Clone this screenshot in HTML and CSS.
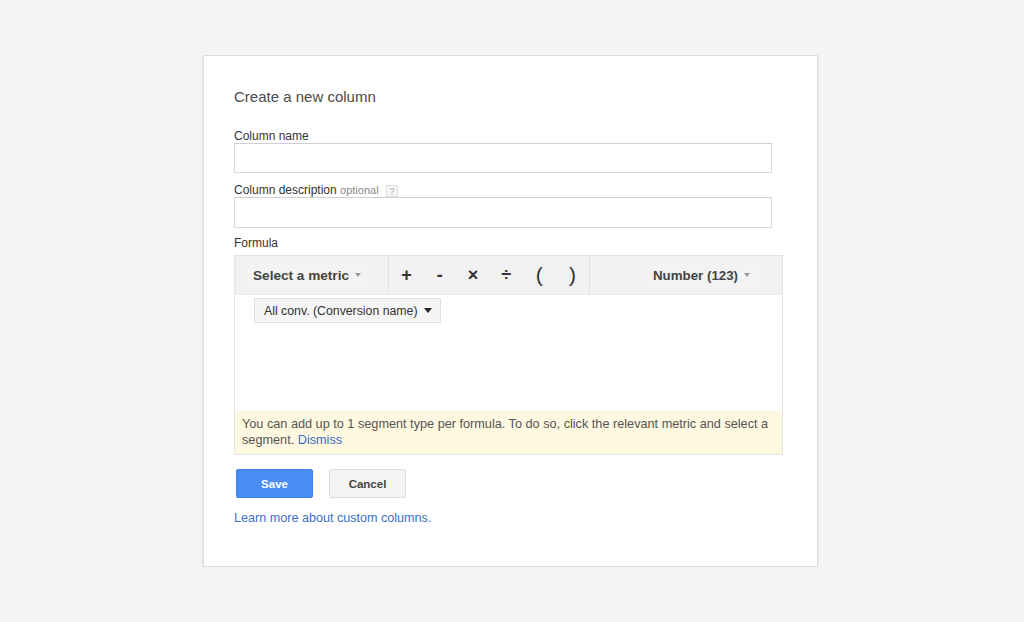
FILE: index.html
```html
<!DOCTYPE html>
<html lang="en">
<head>
  <meta charset="UTF-8">
  <title>Create a new column</title>
  <link rel="stylesheet" href="styles.css">
</head>
<body>

  <!-- Dialog -->
  <div class="dialog">
    <h2 class="title">Create a new column</h2>

    <label class="field-label">Column name</label>
    <input type="text" class="field-input name-input">

    <label class="field-label desc-label">Column description <span class="optional">optional</span> <span class="help">?</span></label>
    <input type="text" class="field-input desc-input">

    <label class="field-label formula-label">Formula</label>
    <div class="formula">
      <div class="toolbar">
        <div class="tb-metric"><span class="tb-btn">Select a metric <span class="caret"></span></span></div>
        <div class="tb-ops">
          <span class="op">+</span>
          <span class="op">-</span>
          <span class="op">×</span>
          <span class="op">÷</span>
          <span class="op paren">(</span>
          <span class="op paren">)</span>
        </div>
        <div class="tb-number"><span class="tb-btn">Number (123) <span class="caret"></span></span></div>
      </div>
      <div class="formula-body">
        <span class="chip">All conv. (Conversion name) <span class="caret dark"></span></span>
      </div>
      <p class="notice">You can add up to 1 segment type per formula. To do so, click the relevant metric and select a segment.&nbsp;<a href="#" class="link">Dismiss</a></p>
    </div>

    <div class="actions">
      <button class="btn btn-save">Save</button>
      <button class="btn btn-cancel">Cancel</button>
    </div>

    <a href="#" class="link learn">Learn more about custom columns.</a>
  </div>

</body>
</html>
```

FILE: styles.css
```css
* {
  margin: 0;
  padding: 0;
  box-sizing: border-box;
}

body {
  font-family: 'Liberation Sans', Arial, sans-serif;
  background: #f4f4f4;
  color: #333;
  font-size: 12px;
}

.dialog {
  width: 615px;
  height: 512px;
  margin: 55px 0 0 203px;
  padding: 31px 44px 0 30px;
  background: #fff;
  border: 1px solid #dcdcdc;
  box-shadow: 0 2px 2px rgba(0, 0, 0, 0.12);
}

.title {
  font-size: 15px;
  font-weight: normal;
  line-height: 20px;
  color: #4a4a4a;
  margin-bottom: 23px;
}

.field-label {
  display: block;
  font-size: 12px;
  line-height: 13px;
  color: #333;
}

.desc-label {
  margin-top: 11px;
}

.formula-label {
  margin-top: 9px;
}

.optional {
  color: #888;
  font-size: 11px;
}

.help {
  display: inline-block;
  width: 12px;
  height: 12px;
  margin-left: 4px;
  border: 1px solid #ddd;
  background: #f6f6f6;
  color: #aaa;
  font-size: 9px;
  line-height: 10px;
  text-align: center;
}

.field-input {
  display: block;
  width: 538px;
  height: 30px;
  border: 1px solid #d9d9d9;
  border-top-color: #cfcfcf;
  background: #fff;
}

.desc-input {
  height: 31px;
}

.formula {
  width: 549px;
  height: 200px;
  margin-top: 5px;
  border: 1px solid #e4e4e4;
  display: flex;
  flex-direction: column;
}

.toolbar {
  display: flex;
  height: 39px;
  background: #f1f1f1;
  border-bottom: 1px solid #ececec;
}

.tb-metric,
.tb-ops,
.tb-number {
  display: flex;
  align-items: center;
}

.tb-metric {
  width: 154px;
  padding-left: 12px;
  border-right: 1px solid #e2e2e2;
}

.tb-ops {
  width: 201px;
  padding-left: 1px;
  border-right: 1px solid #e2e2e2;
}

.tb-number {
  flex: 1;
  justify-content: flex-end;
  padding-right: 22px;
}

.tb-btn {
  display: inline-flex;
  align-items: center;
  height: 28px;
  padding: 0 8px 0 6px;
  background: #f3f3f3;
  font-size: 13px;
  font-weight: bold;
  color: #444;
}

.tb-metric .tb-btn {
  font-size: 13.6px;
}

.tb-number .tb-btn {
  font-size: 13.3px;
  padding-right: 10px;
}

.caret {
  display: inline-block;
  width: 0;
  height: 0;
  margin-left: 6px;
  border-left: 3px solid transparent;
  border-right: 3px solid transparent;
  border-top: 4px solid #999;
}

.caret.dark {
  border-left-width: 4px;
  border-right-width: 4px;
  border-top-width: 5px;
  border-top-color: #222;
}

.op {
  width: 33.5px;
  text-align: center;
  font-size: 18px;
  font-weight: bold;
  color: #333;
}

.op.paren {
  font-size: 21px;
  font-weight: normal;
}

.formula-body {
  flex: 1;
  padding: 3px 0 0 19px;
}

.chip {
  display: inline-flex;
  align-items: center;
  height: 25px;
  padding: 0 8px 0 9px;
  background: #f5f5f5;
  border: 1px solid #e0e0e0;
  font-size: 12.3px;
  color: #333;
}

.notice {
  height: 43px;
  padding: 5px 8px 0 7px;
  background: #fdf8df;
  font-size: 12.7px;
  line-height: 16px;
  color: #555;
}

.link {
  color: #3b6fc6;
  text-decoration: none;
}

.actions {
  display: flex;
  gap: 16px;
  margin-top: 14px;
  padding-left: 2px;
}

.btn {
  width: 77px;
  height: 29px;
  font-family: inherit;
  font-size: 11.5px;
  font-weight: bold;
  border-radius: 2px;
  cursor: pointer;
}

.btn-save {
  background: #4a8cf2;
  border: 1px solid #3f7fe6;
  color: #fff;
}

.btn-cancel {
  background: #f4f4f4;
  border: 1px solid #dcdcdc;
  color: #444;
}

.learn {
  display: block;
  margin-top: 13px;
  font-size: 12.6px;
  line-height: 15px;
}
```
